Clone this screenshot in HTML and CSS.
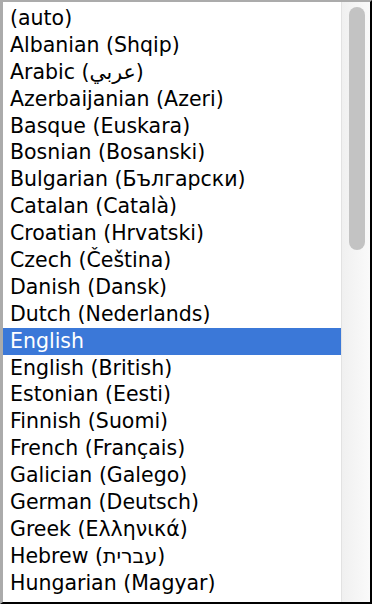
FILE: index.html
```html
<!DOCTYPE html>
<html lang="en">
<head>
<meta charset="UTF-8">
<meta name="viewport" content="width=device-width, initial-scale=1.0">
<title>Language</title>
<link rel="stylesheet" href="styles.css">
</head>
<body>
<div class="listbox">
    <ul class="options">
        <li>(auto)</li>
        <li>Albanian (Shqip)</li>
        <li>Arabic (<span dir="rtl">عربي</span>)</li>
        <li>Azerbaijanian (Azeri)</li>
        <li>Basque (Euskara)</li>
        <li>Bosnian (Bosanski)</li>
        <li>Bulgarian (Български)</li>
        <li>Catalan (Català)</li>
        <li>Croatian (Hrvatski)</li>
        <li>Czech (Čeština)</li>
        <li>Danish (Dansk)</li>
        <li>Dutch (Nederlands)</li>
        <li class="selected">English</li>
        <li>English (British)</li>
        <li>Estonian (Eesti)</li>
        <li>Finnish (Suomi)</li>
        <li>French (Français)</li>
        <li>Galician (Galego)</li>
        <li>German (Deutsch)</li>
        <li>Greek (Ελληνικά)</li>
        <li>Hebrew (<span dir="rtl">עברית</span>)</li>
        <li>Hungarian (Magyar)</li>
    </ul>
    <div class="scrollbar">
        <div class="thumb"></div>
    </div>
</div>
</body>
</html>
```

FILE: styles.css
```css
body {
    margin: 0;
    font-family: "DejaVu Sans", Verdana, sans-serif;
    background-color: #fff;
}

.listbox {
    display: flex;
    width: 372px;
    height: 604px;
    box-sizing: border-box;
    border-top: 2px solid #ababab;
    border-left: 3px solid #ababab;
    border-right: 2px solid #000;
    border-bottom: 2px solid #000;
    overflow: hidden;
}

.options {
    flex: 1;
    margin: 0;
    padding: 3px 0 0;
    list-style: none;
    overflow: hidden;
}

.options li {
    height: 26.9px;
    line-height: 26.9px;
    padding-left: 7px;
    font-size: 20.5px;
    color: #000;
    white-space: nowrap;
}

.options li.selected {
    background-color: #3b78d8;
    color: #fff;
}

.scrollbar {
    width: 29px;
    box-sizing: border-box;
    border-left: 1px solid #e2e2e2;
    background: linear-gradient(to right, #f0f0f0, #fafafa);
    padding: 5px 5px 0 7px;
}

.thumb {
    height: 243px;
    border-radius: 8px;
    background-color: #c3c3c3;
}
```
